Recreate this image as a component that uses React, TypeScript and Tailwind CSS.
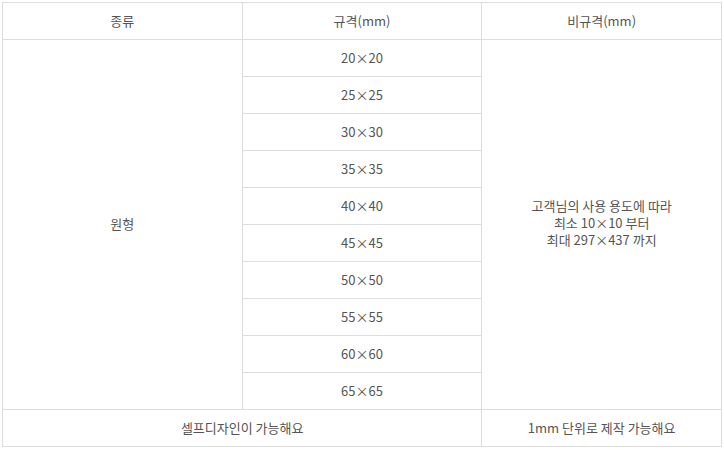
import React from "react";

const sizes = ["20×20", "25×25", "30×30", "35×35", "40×40", "45×45", "50×50", "55×55", "60×60", "65×65"];

const cell = "border border-[#dddddd] text-center align-middle p-0 pb-[2px]";

export default function App() {
  return (
    <div className="bg-white w-[724px] h-[450px] pt-[2px] pl-[2px]">
      <table
        className="table-fixed border-collapse w-[720px] text-[13px] leading-[17px] text-[#555555]"
        style={{ fontFamily: '"Noto Sans CJK KR", "Noto Sans", sans-serif' }}
      >
        <colgroup>
          <col className="w-1/3" />
          <col className="w-1/3" />
          <col className="w-1/3" />
        </colgroup>
        <thead>
          <tr className="h-[37px]">
            <th className={`${cell} font-normal`}>종류</th>
            <th className={`${cell} font-normal`}>규격(mm)</th>
            <th className={`${cell} font-normal`}>비규격(mm)</th>
          </tr>
        </thead>
        <tbody>
          {sizes.map((s, i) => (
            <tr key={s} className="h-[37px]">
              {i === 0 && (
                <td rowSpan={10} className={cell}>
                  원형
                </td>
              )}
              <td className={cell}>{s}</td>
              {i === 0 && (
                <td rowSpan={10} className={`${cell} pb-[4px]`}>
                  고객님의 사용 용도에 따라
                  <br />
                  최소 10×10 부터
                  <br />
                  최대 297×437 까지
                </td>
              )}
            </tr>
          ))}
          <tr className="h-[37px]">
            <td colSpan={2} className={cell}>
              셀프디자인이 가능해요
            </td>
            <td className={cell}>1mm 단위로 제작 가능해요</td>
          </tr>
        </tbody>
      </table>
    </div>
  );
}
